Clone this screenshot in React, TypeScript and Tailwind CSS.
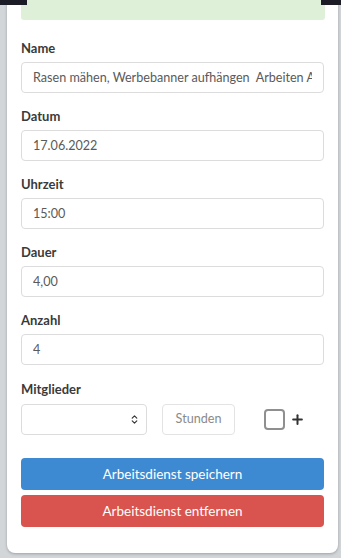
import { ChevronsUpDown, Plus } from "lucide-react"

const font = { fontFamily: "Lato, 'Open Sans', sans-serif" }

function Field({ label, value }: { label: string; value: string }) {
  return (
    <div className="mb-[13px]">
      <label className="block text-[13px] leading-[20px] font-bold text-[#3a3a3a] mb-[4px]">{label}</label>
      <input
        readOnly
        value={value}
        className="block w-full h-[31px] rounded-[4px] border border-[#dcdcdc] bg-white pl-[11px] pr-[11px] text-[12.6px] text-[#5a5a5a] outline-none"
      />
    </div>
  )
}

export default function App() {
  return (
    <div className="relative min-h-[558px] bg-[#d3d6d9] overflow-hidden" style={font}>
      {/* dark edges of the page behind the modal */}
      <div className="absolute left-0 top-0 w-[27px] h-[5px] bg-[#1b1c26]" />
      <div className="absolute right-0 top-0 w-[20px] h-[5px] bg-[#1b1c26]" />

      <div className="ml-[7px] mr-[3px] bg-white rounded-b-[8px] shadow-[0_1px_3px_rgba(0,0,0,0.25)] px-[14px] pb-[26px]">
        <div className="h-[20px] bg-[#dff0d8] rounded-b-[3px] -mr-[1px]" />

        <div className="pt-[18px]">
          <Field label="Name" value="Rasen mähen, Werbebanner aufhängen  Arbeiten Aller Art" />
          <Field label="Datum" value="17.06.2022" />
          <Field label="Uhrzeit" value="15:00" />
          <Field label="Dauer" value="4,00" />
          <Field label="Anzahl" value="4" />

          <div className="pt-[1px]">
            <label className="block text-[13px] leading-[20px] font-bold text-[#3a3a3a] mb-[5px]">Mitglieder</label>
            <div className="flex items-center">
              <div className="w-[126px] h-[31px] rounded-[4px] border border-[#dcdcdc] flex items-center justify-end pr-[6px]">
                <ChevronsUpDown className="w-[11px] h-[11px] text-[#333]" strokeWidth={2.5} />
              </div>
              <div className="ml-[15px] w-[73px] h-[31px] rounded-[4px] border border-[#e3e3e3] flex items-center justify-center text-[12.6px] text-[#8a8a8a]">
                Stunden
              </div>
              <div className="ml-[29px] w-[21px] h-[21px] rounded-[4px] border-2 border-[#8f8f8f]" />
              <Plus className="ml-[5px] w-[15px] h-[15px] text-[#333]" strokeWidth={3.2} />
            </div>
          </div>

          <button className="mt-[23px] w-full h-[32px] rounded-[4px] bg-[#3d8ad2] text-white text-[13.5px]">
            Arbeitsdienst speichern
          </button>
          <button className="mt-[5px] w-full h-[32px] rounded-[4px] bg-[#d9534f] text-white text-[13.5px]">
            Arbeitsdienst entfernen
          </button>
        </div>
      </div>
    </div>
  )
}
